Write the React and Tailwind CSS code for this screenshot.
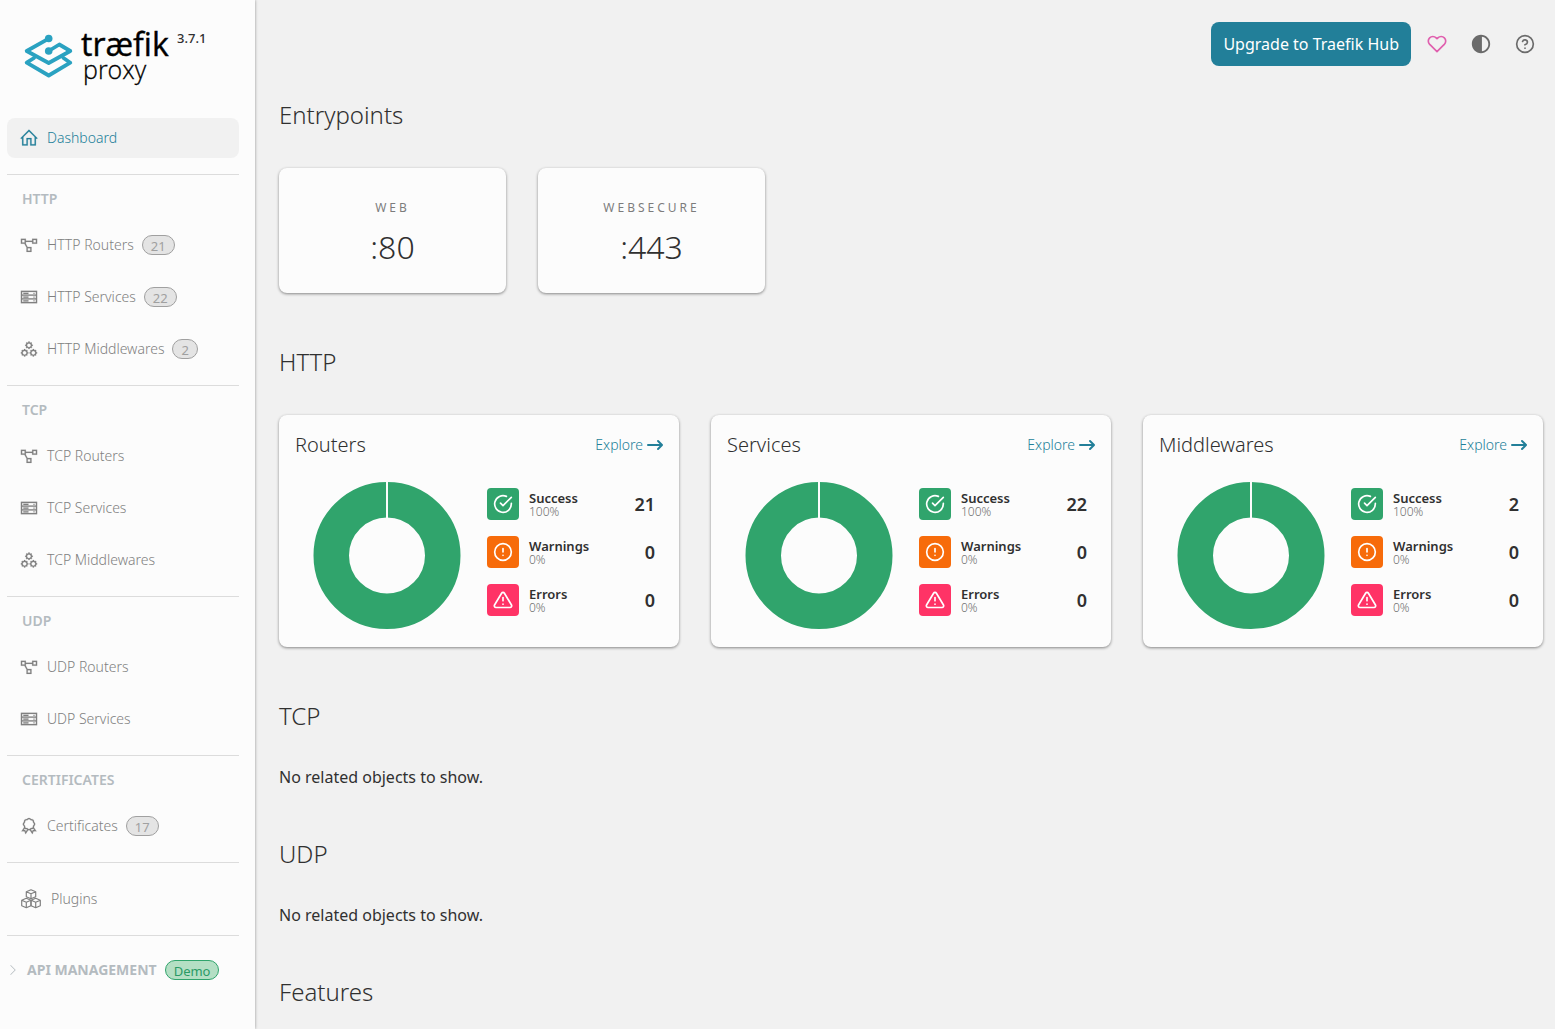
import { BsChevronRight } from "react-icons/bs";
import { FiAlertCircle, FiAlertTriangle, FiCheckCircle, FiHeart, FiHelpCircle } from "react-icons/fi";
import { HiArrowNarrowRight } from "react-icons/hi";
import {
  LiaAwardSolid,
  LiaCogsSolid,
  LiaHomeSolid,
  LiaProjectDiagramSolid,
  LiaServerSolid,
} from "react-icons/lia";
import { MdContrast } from "react-icons/md";

const navSections = [
  {
    title: "HTTP",
    items: [
      { label: "HTTP Routers", icon: LiaProjectDiagramSolid, count: 21 },
      { label: "HTTP Services", icon: LiaServerSolid, count: 22 },
      { label: "HTTP Middlewares", icon: LiaCogsSolid, count: 2 },
    ],
  },
  {
    title: "TCP",
    items: [
      { label: "TCP Routers", icon: LiaProjectDiagramSolid },
      { label: "TCP Services", icon: LiaServerSolid },
      { label: "TCP Middlewares", icon: LiaCogsSolid },
    ],
  },
  {
    title: "UDP",
    items: [
      { label: "UDP Routers", icon: LiaProjectDiagramSolid },
      { label: "UDP Services", icon: LiaServerSolid },
    ],
  },
  {
    title: "CERTIFICATES",
    items: [{ label: "Certificates", icon: LiaAwardSolid, count: 17 }],
  },
];

const entrypoints = [
  { name: "WEB", address: ":80" },
  { name: "WEBSECURE", address: ":443" },
];

const resources = [
  { title: "Routers", total: 21 },
  { title: "Services", total: 22 },
  { title: "Middlewares", total: 2 },
];

function Logo() {
  return (
    <svg width="148" height="72" viewBox="0 0 148 72" role="img" aria-label="Traefik Proxy">
      <g fill="none" stroke="#2aa2c1" strokeWidth="3.8" strokeLinejoin="round" strokeLinecap="round">
        <path d="M25.700 20.700 3.700 33 25.700 45 47.300 33 36.300 26.500 25.700 33" />
        <path d="M11 40 3.700 44.700 25.700 57.500 47.300 44.700 40.500 40" />
      </g>
      <circle cx="25.700" cy="20.500" r="3.800" fill="#2aa2c1" />
      <circle cx="25.700" cy="33" r="3.800" fill="#2aa2c1" />
      <text x="58" y="38" fontFamily="Open Sans, sans-serif" fontSize="32" fill="#000" stroke="#000" strokeWidth="0.4">
        træfik
      </text>
      <text x="60" y="61" fontFamily="Open Sans, sans-serif" fontSize="25" fontWeight="300" fill="#000" stroke="#000" strokeWidth="0.3">
        proxy
      </text>
    </svg>
  );
}

function PluginsIcon() {
  return (
    <svg width="20" height="20" viewBox="0 0 20 20" fill="none" stroke="currentColor" strokeWidth="1.2" strokeLinejoin="round">
      <path d="M10 .8 14.700 2.800V7.800L10 9.800 5.300 7.800V2.800ZM5.300 2.800 10 4.800 14.700 2.800M10 4.800V9.800" />
      <path d="M5.300 9.200 9.900 11.200V16.700L5.300 18.700.7 16.700V11.200ZM.7 11.200 5.300 13.200 9.900 11.200M5.300 13.200V18.700" />
      <path d="M14.700 9.200 19.300 11.200V16.700L14.700 18.700 10.100 16.700V11.200ZM10.100 11.200 14.700 13.200 19.300 11.200M14.700 13.200V18.700" />
    </svg>
  );
}

function NavItem({ label, icon: Icon, count, active }) {
  return (
    <a
      href="#"
      className={`flex h-10 items-center rounded-lg pl-3 text-sm ${active ? "bg-[#f1f1f1] text-[#227f99]" : "text-[#808080]"}`}
    >
      <Icon size={20} strokeWidth={0.3} />
      <span className="ml-2 font-light">{label}</span>
      {count && (
        <span className="ml-2 h-5 rounded-full border border-[#a0a0a0] bg-[#e4e4e4] px-2 text-[13px] leading-5 text-[#a0a0a0]">
          {count}
        </span>
      )}
    </a>
  );
}

function Sidebar() {
  return (
    <aside className="w-[255px] shrink-0 bg-[#fcfcfc] pr-4 pl-[7px] shadow-[0_0_3px_rgba(0,0,0,0.4)]">
      <div className="flex h-[118px] items-start pt-[18px] pl-4">
        <Logo />
        <span className="mt-2.5 ml-1.5 text-[13px] leading-5 font-medium">3.7.1</span>
      </div>
      <nav>
        <NavItem label="Dashboard" icon={LiaHomeSolid} active />
        {navSections.map((section) => (
          <div key={section.title} className="mt-4 border-t border-[#dcdcdc]">
            <h3 className="px-[15px] pt-3.5 pb-4 text-sm leading-5 font-semibold text-[#b4bbc0]">
              {section.title}
            </h3>
            <div className="flex flex-col gap-3">
              {section.items.map((item) => (
                <NavItem key={item.label} {...item} />
              ))}
            </div>
          </div>
        ))}
        <div className="mt-4 border-y border-[#dcdcdc] py-4">
          <a href="#" className="flex h-10 items-center pl-3.5 text-sm text-[#808080]">
            <PluginsIcon />
            <span className="ml-2.5 font-light">Plugins</span>
          </a>
        </div>
        <button type="button" className="mt-6 flex items-center text-sm leading-5 font-bold text-[#b4bbc0]">
          <BsChevronRight size={12} />
          <span className="ml-2">API MANAGEMENT</span>
          <span className="ml-2 h-5 rounded-full border border-[#30a46c] bg-[#b4dfc4] px-2 text-[13px] leading-5 font-normal text-[#2b9a66]">
            Demo
          </span>
        </button>
      </nav>
    </aside>
  );
}

function Header() {
  return (
    <header className="flex justify-end pt-[22px] pr-2">
      <button type="button" className="h-11 rounded-lg bg-[#227f99] px-3 text-base text-white">
        Upgrade to Traefik Hub
      </button>
      <div className="ml-1 flex text-[#6b6b6b]">
        <button type="button" aria-label="Sponsor" className="grid size-11 place-items-center text-[#e05fae]">
          <FiHeart size={20} />
        </button>
        <button type="button" aria-label="Toggle theme" className="grid size-11 place-items-center">
          <MdContrast size={22} />
        </button>
        <button type="button" aria-label="Help" className="grid size-11 place-items-center">
          <FiHelpCircle size={20} />
        </button>
      </div>
    </header>
  );
}

function Section({ title, children }) {
  return (
    <section className="mb-[53px]">
      <h2 className="mb-[37px] text-2xl font-light">{title}</h2>
      {children}
    </section>
  );
}

function Card({ className, children }) {
  return (
    <div className={`rounded-lg bg-[#fcfcfc] shadow-[0_1px_3px_rgba(0,0,0,0.45)] ${className}`}>
      {children}
    </div>
  );
}

function Donut() {
  return (
    <svg className="mx-auto" width="150" height="150" viewBox="0 0 150 150">
      <circle cx="75" cy="74.500" r="55.750" fill="none" stroke="#30a46c" strokeWidth="35.500" />
      <path d="M75 0V38" stroke="#fcfcfc" strokeWidth="2" />
    </svg>
  );
}

function StatusRow({ icon: Icon, color, label, percent, value }) {
  return (
    <li className="flex h-8 items-center">
      <span className={`grid size-8 place-items-center rounded text-white ${color}`}>
        <Icon size={20} />
      </span>
      <span className="ml-2.5 flex flex-col">
        <span className="text-[13px] leading-4 font-semibold">{label}</span>
        <span className="text-[12px] leading-3 font-light text-[#707070]">{percent}</span>
      </span>
      <span className="ml-auto pr-2 text-lg font-semibold">{value}</span>
    </li>
  );
}

function ResourceCard({ title, total }) {
  return (
    <Card className="p-4">
      <div className="mb-[22px] flex h-7 items-center justify-between">
        <h3 className="text-xl font-light">{title}</h3>
        <a href="#" className="-mr-0.5 flex items-center gap-0.5 text-sm text-[#227f99]">
          <span className="font-light">Explore</span>
          <HiArrowNarrowRight size={20} />
        </a>
      </div>
      <div className="grid grid-cols-[184px_1fr] gap-2">
        <Donut />
        <ul className="mt-[7px] flex flex-col gap-4">
          <StatusRow icon={FiCheckCircle} color="bg-[#30a46c]" label="Success" percent="100%" value={total} />
          <StatusRow icon={FiAlertCircle} color="bg-[#f76b0a]" label="Warnings" percent="0%" value={0} />
          <StatusRow icon={FiAlertTriangle} color="bg-[#ff3366]" label="Errors" percent="0%" value={0} />
        </ul>
      </div>
    </Card>
  );
}

export default function App() {
  return (
    <div className="flex h-screen overflow-hidden bg-[#f1f1f1] font-['Noto_Sans','Open_Sans',sans-serif] text-[#303030]">
      <Sidebar />
      <div className="min-w-0 flex-1">
        <Header />
        <main className="pt-[33px] pr-3 pl-6">
          <Section title="Entrypoints">
            <div className="flex flex-wrap gap-8">
              {entrypoints.map((entry) => (
                <Card key={entry.name} className="w-[227px] pt-8 pb-6 text-center">
                  <p className="text-xs tracking-[3px] text-[#7c7c7c]">{entry.name}</p>
                  <p className="mt-2 text-[32px] leading-[45px] font-light">{entry.address}</p>
                </Card>
              ))}
            </div>
          </Section>
          <Section title="HTTP">
            <div className="grid grid-cols-3 gap-8">
              {resources.map((resource) => (
                <ResourceCard key={resource.title} {...resource} />
              ))}
            </div>
          </Section>
          <Section title="TCP">
            <p className="leading-4">No related objects to show.</p>
          </Section>
          <Section title="UDP">
            <p className="leading-4">No related objects to show.</p>
          </Section>
          <Section title="Features" />
        </main>
      </div>
    </div>
  );
}
